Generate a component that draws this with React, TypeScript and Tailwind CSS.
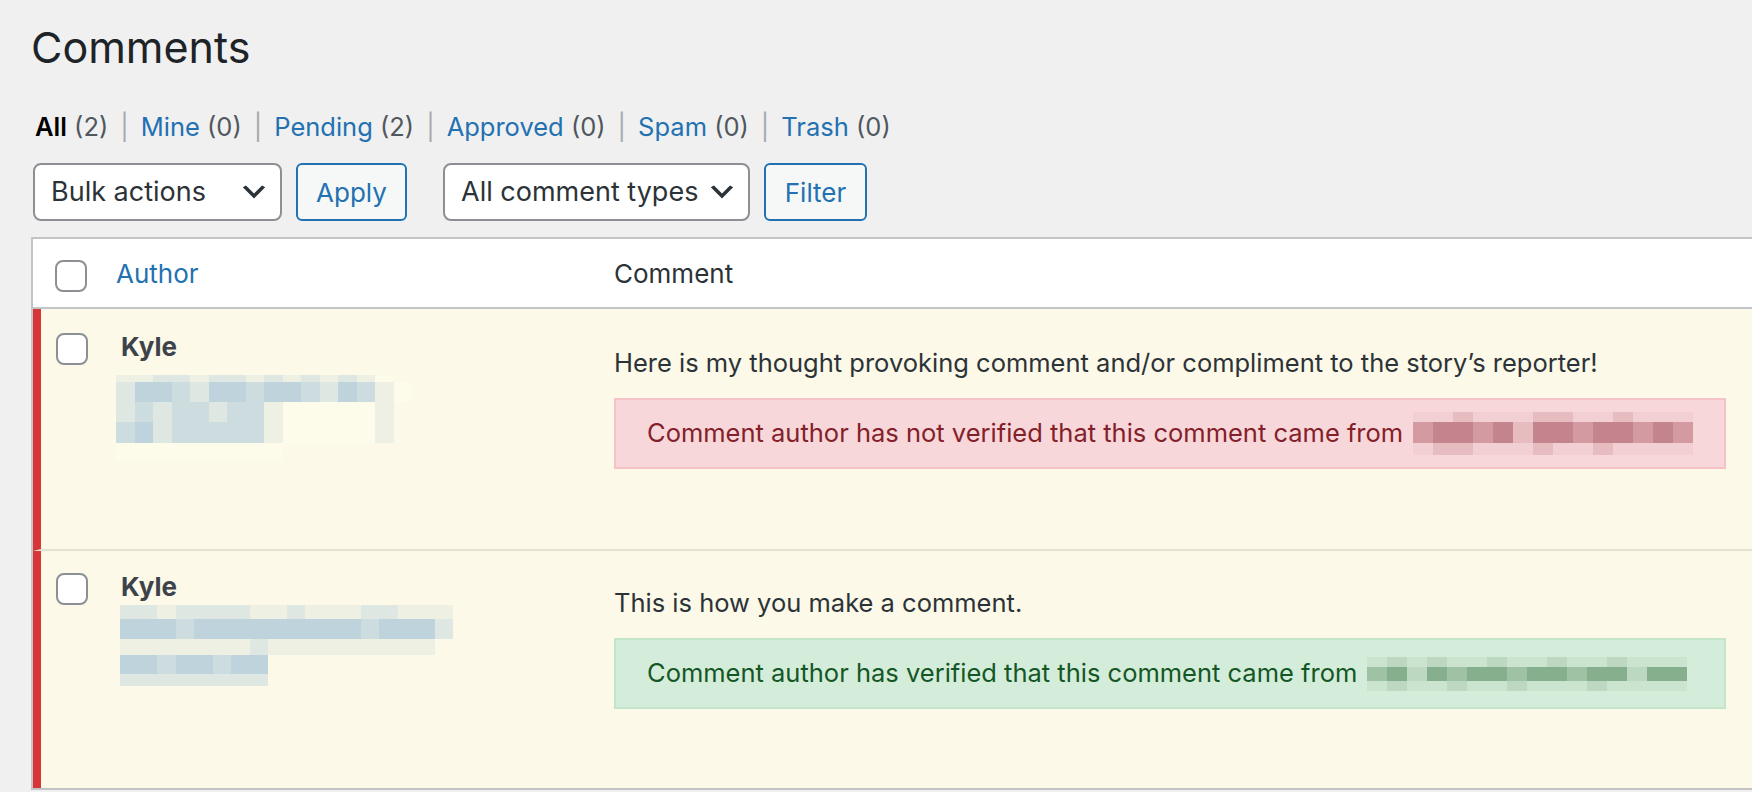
import React from 'react';

const A = 'bg-[#bfd3dc]';
const B = 'bg-[#cddcdf]';
const C = 'bg-[#dfe7e3]';
const D = 'bg-[#eef0e4]';
const E = 'bg-[#fdfbe9]';

const P1 = 'bg-[#c4848e]';
const P2 = 'bg-[#d39aa2]';
const P3 = 'bg-[#e6bcc1]';
const P4 = 'bg-[#f1cfd2]';

const G1 = 'bg-[#86b08d]';
const G2 = 'bg-[#9fc2a4]';
const G3 = 'bg-[#bcd8c0]';
const G4 = 'bg-[#cbe4cf]';

type MosaicRow = { h: string; cells: string[] };

const authorBlur1: MosaicRow[] = [
  { h: 'h-[7px]', cells: [D, D, C, C, D, C, C, D, C, D, C, D, C, D, E] },
  { h: 'h-[20px]', cells: [C, A, A, B, C, A, A, B, A, A, B, C, A, B, D, E] },
  { h: 'h-[20px]', cells: [C, B, C, B, B, C, B, B, D, E, E, E, E, E, D] },
  { h: 'h-[21px]', cells: [B, A, C, B, B, B, B, B, D, E, E, E, E, E, D] },
  { h: 'h-[18px]', cells: [E, E, E, E, E, E, E, E, E] },
];

const authorBlur2: MosaicRow[] = [
  { h: 'h-[14px]', cells: [C, C, D, C, C, C, C, D, D, C, D, D, D, C, C, D, D, D] },
  { h: 'h-[20px]', cells: [A, A, A, B, A, A, A, A, A, A, A, A, A, B, A, A, A, C] },
  { h: 'h-[16px]', cells: [D, D, D, D, D, D, D, C, D, D, D, D, D, D, D, D, D] },
  { h: 'h-[19px]', cells: [A, A, B, A, A, B, A, A] },
  { h: 'h-[12px]', cells: [C, C, C, C, C, C, C, C] },
];

const redBlur: MosaicRow[] = [
  { h: 'h-[10px]', cells: [P4, P4, P3, P4, P4, P4, P3, P3, P4, P4, P3, P4, P4, P4] },
  { h: 'h-[21px]', cells: [P2, P1, P1, P2, P1, P3, P1, P1, P2, P1, P1, P2, P1, P2] },
  { h: 'h-[12px]', cells: [P4, P3, P3, P4, P4, P4, P3, P4, P4, P3, P4, P4, P4, P4] },
];

const greenBlur: MosaicRow[] = [
  { h: 'h-[10px]', cells: [G4, G3, G4, G3, G4, G4, G3, G4, G4, G3, G4, G4, G3, G4, G4, G4] },
  { h: 'h-[14px]', cells: [G2, G1, G3, G1, G2, G1, G1, G2, G1, G1, G2, G1, G1, G3, G1, G1] },
  { h: 'h-[10px]', cells: [G4, G3, G4, G4, G3, G4, G4, G3, G4, G4, G4, G3, G4, G4, G4, G4] },
];

function Mosaic({ rows, cellW }: { rows: MosaicRow[]; cellW: string }) {
  return (
    <div className="flex flex-col">
      {rows.map((row, i) => (
        <div key={i} className={`flex ${row.h}`}>
          {row.cells.map((c, j) => (
            <div key={j} className={`${cellW} h-full ${c}`} />
          ))}
        </div>
      ))}
    </div>
  );
}

function Checkbox() {
  return <div className="w-[32px] h-[32px] shrink-0 rounded-[8px] border-2 border-[#8c8f94] bg-white" />;
}

function Chevron() {
  return (
    <svg width="32" height="32" viewBox="0 0 20 20" className="shrink-0">
      <path d="M5 6l5 5 5-5 2 1-7 7-7-7 2-1z" fill="#2c3338" />
    </svg>
  );
}

function Select({ label, width }: { label: string; width: string }) {
  return (
    <div
      className={`${width} h-[58px] flex items-center justify-between pl-[16px] pr-[10px] bg-white border-2 border-[#8c8f94] rounded-[8px] text-[27px] text-[#2c3338] whitespace-nowrap`}
    >
      <span>{label}</span>
      <Chevron />
    </div>
  );
}

function Button({ label, width }: { label: string; width: string }) {
  return (
    <div
      className={`${width} h-[58px] flex items-center justify-center bg-[#f6f7f7] border-2 border-[#2271b1] rounded-[6px] text-[26px] text-[#2271b1]`}
    >
      {label}
    </div>
  );
}

function Sep() {
  return <span className="text-[#a7aaad] mx-[12px]">|</span>;
}

function Notice({ verified }: { verified: boolean }) {
  const box = verified
    ? 'bg-[#d4eddb] border-[#c3e6cb] text-[#155724]'
    : 'bg-[#f8d7da] border-[#f5c2c7] text-[#842029]';
  return (
    <div className={`w-[1112px] h-[71px] flex items-center pl-[31px] border-2 whitespace-nowrap ${box}`}>
      <span>
        {verified
          ? 'Comment author has verified that this comment came from'
          : 'Comment author has not verified that this comment came from'}
      </span>
      <div className="ml-[10px]">
        <Mosaic rows={verified ? greenBlur : redBlur} cellW="w-[20px]" />
      </div>
    </div>
  );
}

function Row({
  blur,
  blurClass,
  text,
  verified,
  height,
  top,
  border,
}: {
  blur: MosaicRow[];
  blurClass: string;
  text: string;
  verified: boolean;
  height: string;
  top: string;
  border: string;
}) {
  return (
    <div className={`flex ${height} ${top} bg-[#fcf9e8] border-l-[8px] border-[#d63638] ${border}`}>
      <div className="w-[573px] shrink-0 flex pl-[15px] pt-[2px]">
        <Checkbox />
        <div className="ml-[33px] -mt-[4px]">
          <div className="text-[26px] leading-[36px] font-bold text-[#3c434a]">Kyle</div>
          <div className={blurClass}>
            <Mosaic rows={blur} cellW="w-[18.5px]" />
          </div>
        </div>
      </div>
      <div className="pt-[14px] flex flex-col">
        <div className="text-[25.5px] leading-[36px] text-[#2c3338] whitespace-nowrap">{text}</div>
        <div className="mt-[17px] text-[25.5px]">
          <Notice verified={verified} />
        </div>
      </div>
    </div>
  );
}

export default function App() {
  return (
    <div
      className="w-[1752px] h-[792px] overflow-hidden bg-[#f0f0f1] pl-[31px]"
      style={{ fontFamily: 'Inter, "Noto Sans", sans-serif' }}
    >
      <h1 className="pt-[17px] text-[43px] leading-[60px] font-normal text-[#1d2327]">Comments</h1>

      <div className="mt-[32px] ml-[4px] text-[25.5px] leading-[36px] text-[#50575e] whitespace-nowrap">
        <span className="font-semibold text-black">All</span> (2)
        <Sep />
        <span className="text-[#2271b1]">Mine</span> (0)
        <Sep />
        <span className="text-[#2271b1]">Pending</span> (2)
        <Sep />
        <span className="text-[#2271b1]">Approved</span> (0)
        <Sep />
        <span className="text-[#2271b1]">Spam</span> (0)
        <Sep />
        <span className="text-[#2271b1]">Trash</span> (0)
      </div>

      <div className="mt-[18px] ml-[2px] flex items-center">
        <Select label="Bulk actions" width="w-[249px]" />
        <div className="ml-[14px]">
          <Button label="Apply" width="w-[111px]" />
        </div>
        <div className="ml-[36px]">
          <Select label="All comment types" width="w-[307px]" />
        </div>
        <div className="ml-[14px]">
          <Button label="Filter" width="w-[103px]" />
        </div>
      </div>

      <div className="mt-[16px] w-[1760px] border-2 border-[#c3c4c7]">
        <div className="h-[70px] flex items-center bg-white border-b-2 border-[#c3c4c7]">
          <div className="w-[581px] shrink-0 flex items-center pl-[22px]">
            <div className="mt-[6px]">
              <Checkbox />
            </div>
            <span className="ml-[29px] text-[26px] text-[#2271b1]">Author</span>
          </div>
          <span className="text-[26px] text-[#2c3338]">Comment</span>
        </div>
        <Row
          blur={authorBlur1}
          blurClass="mt-[10px] -ml-[5px]"
          text="Here is my thought provoking comment and/or compliment to the story’s reporter!"
          verified={false}
          height="h-[242px]"
          top="pt-[22px]"
          border="border-b-2 border-b-[#e5e2d0]"
        />
        <Row
          blur={authorBlur2}
          blurClass="mt-[0px] -ml-[1px]"
          text="This is how you make a comment."
          verified={true}
          height="h-[237px]"
          top="pt-[20px]"
          border=""
        />
      </div>
    </div>
  );
}
